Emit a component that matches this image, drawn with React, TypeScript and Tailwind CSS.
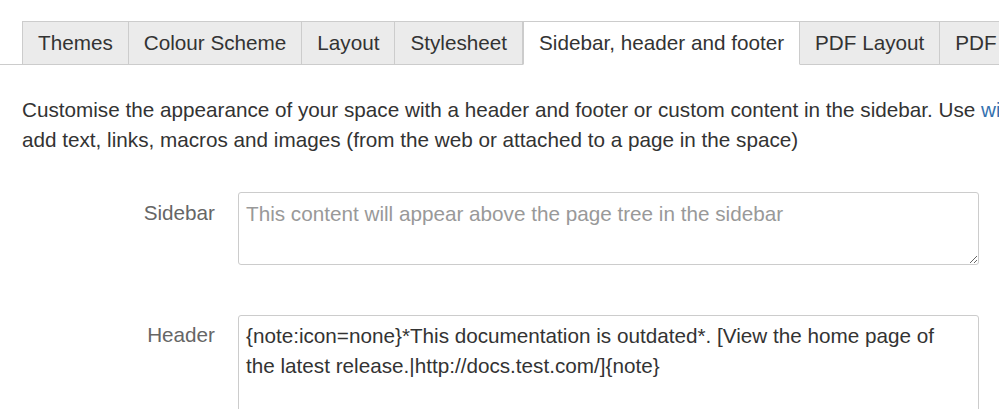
const tabs = ["Themes", "Colour Scheme", "Layout", "Stylesheet", "Sidebar, header and footer", "PDF Layout", "PDF Stylesheet"];
const active = "Sidebar, header and footer";

export default function App() {
  return (
    <div className="h-[409px] w-[999px] overflow-hidden bg-white text-[20.7px] text-[#333] font-['Liberation_Sans',Arial,sans-serif]">
      {/* Tabs */}
      <div className="pt-[21px] border-b border-[#cccccc] w-[999px]">
        <ul className="flex pl-[22px] -mb-px whitespace-nowrap">
          {tabs.map((t) => (
            <li
              key={t}
              className={
                t === active
                  ? "h-[44px] flex items-center px-[15px] border border-[#cccccc] border-b-white bg-white shrink-0"
                  : "h-[44px] flex items-center px-[15px] border border-l-0 first:border-l border-[#cccccc] bg-[#ebebeb] shrink-0"
              }
            >
              {t}
            </li>
          ))}
        </ul>
      </div>

      {/* Description */}
      <p className="mt-[30px] pl-[22px] leading-[30px] whitespace-nowrap">
        Customise the appearance of your space with a header and footer or custom content in the sidebar. Use{" "}
        <a className="text-[#3572b0]">wiki markup</a> to
        <br />
        add text, links, macros and images (from the web or attached to a page in the space)
      </p>

      {/* Form */}
      <div className="mt-[37px] flex flex-col gap-[50px]">
        <div className="flex items-start">
          <label className="w-[215px] text-right text-[#666] pt-[6px] leading-[30px]">Sidebar</label>
          <textarea
            className="ml-[23px] w-[741px] h-[73px] border border-[#cccccc] rounded-[3px] px-[7px] py-[6px] leading-[30px] placeholder:text-[#999] outline-none"
            placeholder="This content will appear above the page tree in the sidebar"
          />
        </div>
        <div className="flex items-start">
          <label className="w-[215px] text-right text-[#666] pt-[5px] leading-[30px]">Header</label>
          <textarea
            className="ml-[23px] w-[741px] h-[110px] border border-[#cccccc] rounded-[3px] pl-[7px] pr-[30px] pt-[5px] leading-[30px] text-[#333] outline-none resize-none"
            defaultValue="{note:icon=none}*This documentation is outdated*. [View the home page of the latest release.|http://docs.test.com/]{note}"
          />
        </div>
      </div>
    </div>
  );
}
